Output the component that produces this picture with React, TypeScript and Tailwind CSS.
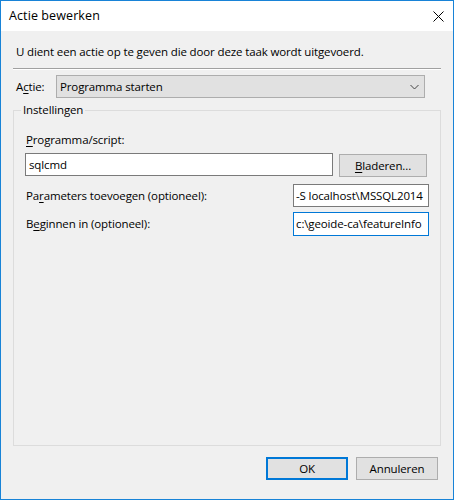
import React from "react";

export default function App() {
  return (
    <div className="w-[454px] h-[500px] border border-[#1883d7] bg-[#f0f0f0] flex flex-col font-['Open_Sans',sans-serif] text-[12px] leading-[16px] text-black overflow-hidden">
      <div className="h-[30px] shrink-0 bg-white flex items-center justify-between pl-[8px] pr-[9px]">
        <span className="text-[12.5px] tracking-[0.1px]">Actie bewerken</span>
        <svg width="11" height="11" viewBox="0 0 11 11">
          <path d="M0.5 0.5 L10.5 10.5 M10.5 0.5 L0.5 10.5" stroke="#000" strokeWidth="1" />
        </svg>
      </div>
      <div className="flex flex-col px-[12px] text-[11.5px] tracking-[-0.13px]">
        <div className="pt-[13px] pl-[3px]">U dient een actie op te geven die door deze taak wordt uitgevoerd.</div>
        <div className="mt-[8px] h-[2px] border-t border-b border-t-[#a0a0a0] border-b-white" />
        <div className="mt-[5px] flex items-center h-[23px]">
          <span className="pl-[3px] w-[43px] shrink-0">
            A<span className="underline underline-offset-2">c</span>tie:
          </span>
          <div className="w-[369px] h-[23px] bg-[#e1e1e1] border border-[#adadad] flex items-center justify-between pl-[3px] pr-[5px]">
            <span>Programma starten</span>
            <svg width="9" height="6" viewBox="0 0 9 6">
              <path d="M0.5 1 L4.5 5 L8.5 1" stroke="#444" strokeWidth="1" fill="none" />
            </svg>
          </div>
        </div>
        <fieldset className="mt-[4px] h-[344px] border border-[#dcdcdc] px-0 pb-0 pt-0 m-0 min-w-0">
          <legend className="ml-[7px] px-[2px] leading-[16px]">Instellingen</legend>
          <div className="pl-[11px] pr-[11px] pt-[14px] flex flex-col">
            <div className="pl-[1px]">
              <span className="underline underline-offset-2">P</span>rogramma/script:
            </div>
            <div className="mt-[5px] flex items-start">
              <div className="w-[308px] h-[23px] bg-white border border-[#7a7a7a] pl-[3px] flex items-center">sqlcmd</div>
              <div className="ml-[6px] mt-[1px] w-[88px] h-[23px] bg-[#e1e1e1] border border-[#adadad] flex items-center justify-center">
                <span>
                  <span className="underline underline-offset-2">B</span>laderen...
                </span>
              </div>
            </div>
            <div className="mt-[7px] flex items-center justify-between h-[23px]">
              <span className="pl-[1px]">
                Pa<span className="underline underline-offset-2">r</span>ameters toevoegen (optioneel):
              </span>
              <div className="w-[136px] h-[23px] bg-white border border-[#7a7a7a] pl-[2px] flex items-center overflow-hidden whitespace-nowrap">
                -S localhost\MSSQL2014
              </div>
            </div>
            <div className="mt-[5px] flex items-center justify-between h-[24px]">
              <span className="pl-[1px]">
                B<span className="underline underline-offset-2">e</span>ginnen in (optioneel):
              </span>
              <div className="w-[136px] h-[24px] bg-white border border-[#0078d7] pl-[2px] flex items-center overflow-hidden whitespace-nowrap">
                c:\geoide-ca\featureInfo
              </div>
            </div>
          </div>
        </fieldset>
        <div className="mt-[11px] flex justify-end pr-[3px]">
          <div className="w-[82px] h-[23px] bg-[#e1e1e1] border-2 border-[#0078d7] flex items-center justify-center">OK</div>
          <div className="ml-[8px] w-[82px] h-[23px] bg-[#e1e1e1] border border-[#adadad] flex items-center justify-center">Annuleren</div>
        </div>
      </div>
    </div>
  );
}
